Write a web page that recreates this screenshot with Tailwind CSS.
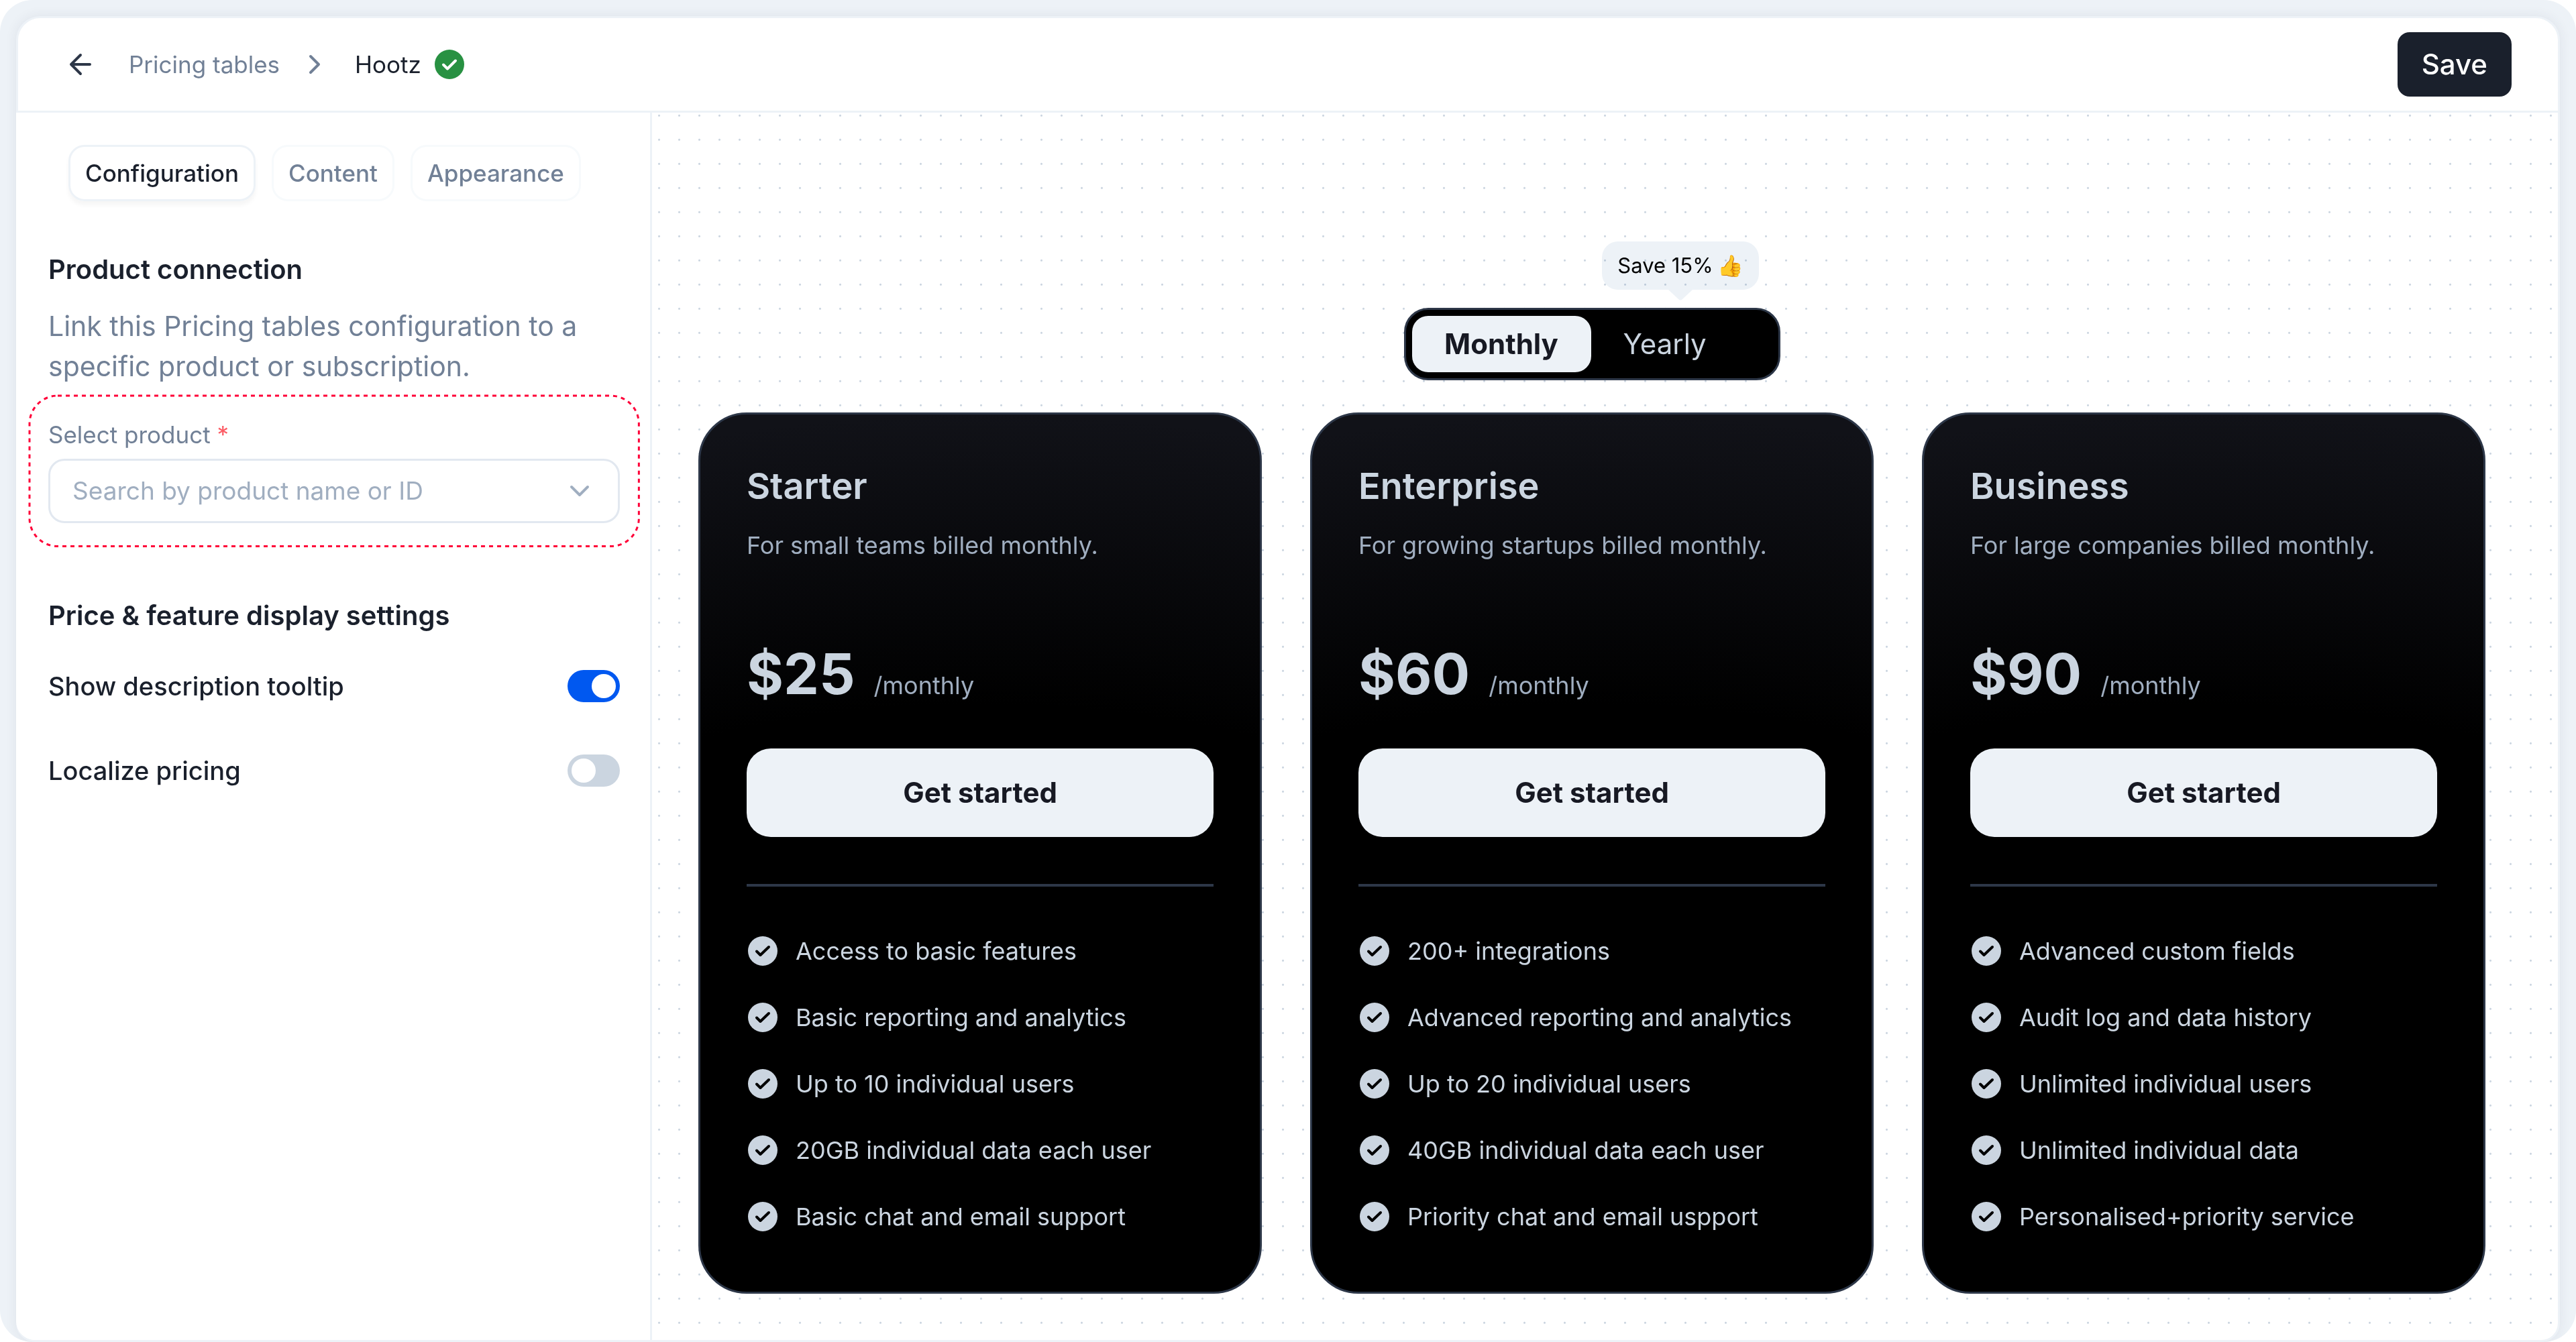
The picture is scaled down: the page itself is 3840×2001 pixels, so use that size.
<!DOCTYPE html>
<html lang="en">
<head>
<meta charset="utf-8">
<title>Hootz – Pricing tables</title>
<meta name="viewport" content="width=device-width, initial-scale=1">
<script src="https://cdn.jsdelivr.net/npm/@tailwindcss/browser@4"></script>
</head>
<body class="bg-white font-['Inter',sans-serif] text-[#1a202c]">
<div class="flex min-h-screen flex-col overflow-hidden rounded-[48px] bg-[#edf2f7] px-6 pt-6">
  <div class="flex flex-1 flex-col rounded-t-[36px] rounded-b-[28px] border-3 border-[#edf2f7] bg-white shadow-[0_0_18px_rgba(45,55,72,0.08)]">
    <header class="flex h-[141px] items-center justify-between border-b-3 border-[#edf2f7] pr-[69px] pl-[69px]">
      <nav aria-label="Breadcrumb" class="flex items-center text-[35px] leading-[48px]">
        <a href="#" aria-label="Back" class="mr-12">
          <svg class="size-12" viewBox="0 0 48 48" fill="none" stroke="#2d3748" stroke-width="4" stroke-linecap="round" stroke-linejoin="round"><path d="M38 24H10M24 10 10 24l14 14"/></svg>
        </a>
        <a href="#" class="text-[#718096]">Pricing tables</a>
        <svg class="mr-9 ml-7 size-12" viewBox="0 0 48 48" fill="none" stroke="#718096" stroke-width="4" stroke-linecap="round" stroke-linejoin="round"><path d="m18 12 12 12-12 12"/></svg>
        <span>Hootz</span>
        <svg class="ml-[18px] size-12" viewBox="0 0 48 48"><circle cx="24" cy="24" r="22" fill="#289142"/><path d="m15 24.500 6 6 12-12" fill="none" stroke="#fff" stroke-width="4" stroke-linecap="round" stroke-linejoin="round"/></svg>
      </nav>
      <button type="button" class="h-24 rounded-[18px] bg-[#1a202c] px-9 text-[42px] leading-[60px] font-medium text-white">Save</button>
    </header>
    <div class="flex flex-1">
      <aside class="-ml-[3px] w-[948px] shrink-0 rounded-bl-[28px] border-r-3 border-[#edf2f7] bg-white pt-12 pr-[45px] pl-12">
        <div role="tablist" class="ml-[30px] flex gap-6 text-[35px] leading-[54px] font-medium">
          <button type="button" role="tab" aria-selected="true" class="h-21 rounded-3xl border-3 border-[#edf2f7] px-[22px] shadow-[0_6px_6px_rgba(0,0,0,0.04)]">Configuration</button>
          <button type="button" role="tab" aria-selected="false" class="h-21 rounded-3xl border-3 border-[#f7fafc] px-[22px] text-[#718096]">Content</button>
          <button type="button" role="tab" aria-selected="false" class="h-21 rounded-3xl border-3 border-[#f7fafc] px-[22px] text-[#718096]">Appearance</button>
        </div>
        <h2 class="mt-[72px] text-[40px] leading-[60px] font-semibold">Product connection</h2>
        <p class="mt-6 text-[41px] leading-[60px] text-[#718096]">Link this Pricing tables configuration to a specific product or subscription.</p>
        <div class="relative -mx-[30px] mt-[12px] px-[30px] pt-[33px] pb-9">
          <svg class="pointer-events-none absolute inset-0 size-full overflow-visible" fill="none" stroke="#ff0038" stroke-width="3" stroke-dasharray="6 6"><rect x="2" y="2" width="99.600%" height="98.500%" rx="42"/></svg>
          <label for="product" class="block text-[35px] leading-[54px] text-[#718096]">Select product <span class="text-[#fc5c65]">*</span></label>
          <div class="relative mt-[9px]">
            <select id="product" class="block h-24 w-full appearance-none rounded-3xl border-3 border-[#e2e8f0] bg-white px-[33px] text-[37px] leading-[54px] text-[#a0aec0]"><option>Search by product name or ID</option></select>
            <svg class="pointer-events-none absolute top-6 right-9 size-12" viewBox="0 0 48 48" fill="none" stroke="#a0aec0" stroke-width="4" stroke-linecap="round" stroke-linejoin="round"><path d="m12 18 12 12 12-12"/></svg>
          </div>
        </div>
        <h2 class="mt-[72px] text-[40px] leading-[60px] font-semibold">Price &amp; feature display settings</h2>
        <div class="mt-[45px] flex items-center justify-between">
          <label for="tooltip-toggle" class="text-[38px] leading-[60px] font-medium">Show description tooltip</label>
          <input id="tooltip-toggle" type="checkbox" role="switch" checked class="h-12 w-[78px] appearance-none rounded-full bg-[#cbd5e0] p-[6px] before:block before:size-9 before:rounded-full before:bg-white checked:bg-[#0058f0] checked:before:ml-[30px]">
        </div>
        <div class="mt-[66px] flex items-center justify-between">
          <label for="localize-toggle" class="text-[38px] leading-[60px] font-medium">Localize pricing</label>
          <input id="localize-toggle" type="checkbox" role="switch" class="h-12 w-[78px] appearance-none rounded-full bg-[#cbd5e0] p-[6px] before:block before:size-9 before:rounded-full before:bg-white checked:bg-[#0058f0] checked:before:ml-[30px]">
        </div>
      </aside>
      <main class="flex-1 bg-[radial-gradient(circle_at_35%_12%,#cbd5e0_1px,transparent_2px)] bg-[length:30px_36px] pt-[192px] pr-[108px] pb-[69px] pl-[69px]">
        <div class="flex flex-col items-center">
          <div class="relative ml-[264px] flex h-[72px] w-[234px] items-center justify-center gap-[6px] rounded-3xl bg-[#edf2f7] text-[31px] leading-[48px] text-black mix-blend-multiply"><span>Save 15%</span><span>👍</span>
            <svg class="absolute top-full left-[99px] h-4 w-9" viewBox="0 0 36 16" fill="#edf2f7"><path d="M0 0h36L21 14q-3 3-6 0Z"/></svg>
          </div>
          <div role="group" aria-label="Billing period" class="mt-[27px] flex h-27 rounded-[36px] border-3 border-[#2d3748] bg-black p-[9px] text-[42px] leading-[60px]">
            <button type="button" aria-pressed="true" class="w-[267px] rounded-3xl bg-[#edf2f7] font-bold text-[#171923]">Monthly</button>
            <button type="button" aria-pressed="false" class="w-[270px] pl-12 text-left text-[#cbd5e0]">Yearly</button>
          </div>
        </div>
        <div id="plans" class="mt-12 grid grid-cols-3 gap-18"></div>
      </main>
    </div>
  </div>
</div>
<script>
const plans = [
  ["Starter", "For small teams billed monthly.", "$25", ["Access to basic features", "Basic reporting and analytics", "Up to 10 individual users", "20GB individual data each user", "Basic chat and email support"]],
  ["Enterprise", "For growing startups billed monthly.", "$60", ["200+ integrations", "Advanced reporting and analytics", "Up to 20 individual users", "40GB individual data each user", "Priority chat and email uspport"]],
  ["Business", "For large companies billed monthly.", "$90", ["Advanced custom fields", "Audit log and data history", "Unlimited individual users", "Unlimited individual data", "Personalised+priority service"]]
];
const check = '<svg class="size-12 shrink-0" viewBox="0 0 48 48"><circle cx="24" cy="24" r="22" fill="#cbd5e0"/><path d="m15 24.500 5.500 5.500 12.500-12" fill="none" stroke="#000" stroke-width="4" stroke-linecap="round" stroke-linejoin="round"/></svg>';
document.getElementById("plans").innerHTML = plans.map(([name, note, price, features]) => `
  <article class="rounded-[72px] border-3 border-[#2d3748] bg-black bg-[radial-gradient(220%_100%_at_50%_100%,#000_67%,#111218_100%)] px-[69px] pt-[69px] pb-[85px] text-[36px] leading-[54px]">
    <h3 class="text-[54px] leading-[75px] font-semibold text-[#cbd5e0]">${name}</h3>
    <p class="mt-6 text-[#a0aec0]">${note}</p>
    <p class="mt-[114px] flex items-baseline gap-[28px] text-[#a0aec0]"><strong class="text-[84px] leading-[102px] font-bold text-[#cbd5e0]">${price}</strong><span>/monthly</span></p>
    <button type="button" class="mt-[60px] block h-33 w-full rounded-[36px] bg-[#edf2f7] text-[42px] leading-[60px] font-bold text-[#171923]">Get started</button>
    <hr class="mt-[70px] h-1 border-0 bg-[#2d3748]">
    <ul class="mt-[69px] flex flex-col gap-[45px] text-[#cbd5e0]">${features.map(f => `<li class="flex items-center gap-[25px]">${check}${f}</li>`).join("")}</ul>
  </article>`).join("");
</script>
</body>
</html>
